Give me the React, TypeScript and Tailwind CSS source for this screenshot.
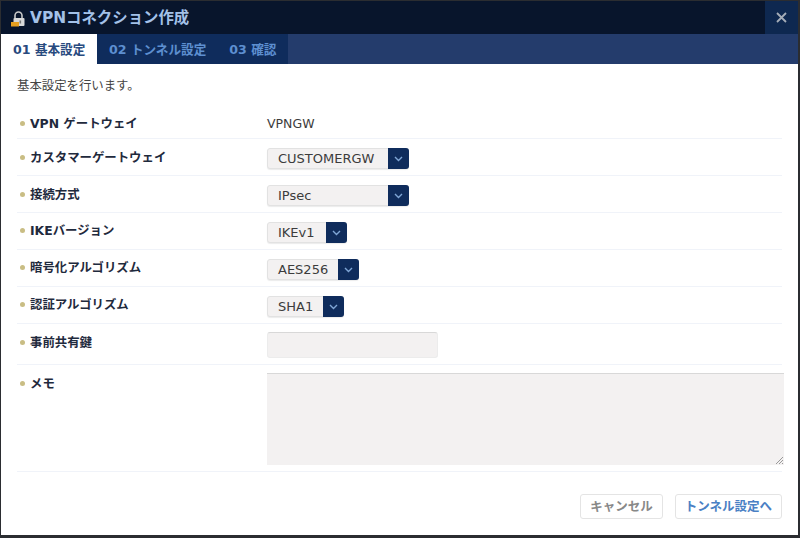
const font = { fontFamily: '"DejaVu Sans","Noto Sans CJK JP",sans-serif' };

function Chevron() {
  return (
    <svg width="9" height="6" viewBox="0 0 9 6" fill="none" stroke="#7fa6d6" strokeWidth="1.4">
      <path d="M1 1l3.5 3.5L8 1" />
    </svg>
  );
}

function Select({ value, width }: { value: string; width: string }) {
  return (
    <div className={`flex h-[21px] ${width} rounded-[3px] border border-[#e2e2e2] bg-[#f3f1f1] shadow-[0_1px_1px_rgba(0,0,0,0.08)]`}>
      <div className="flex-1 pl-[10px] text-[13px] leading-[20px] text-[#3c3c3c]">{value}</div>
      <div className="w-[21px] h-[21px] -my-px -mr-px rounded-r-[3px] bg-[#0f2c5c] flex items-center justify-center"><Chevron /></div>
    </div>
  );
}

function Row({ label, h, children, top }: { label: string; h: string; children: React.ReactNode; top: string }) {
  return (
    <div className={`flex ${h} border-b border-[#f0f3f9]`}>
      <div className={`w-[250px] shrink-0 flex items-start ${top}`}>
        <span className="mt-[6px] mr-[5px] ml-[3px] size-[5px] rounded-full bg-[#c9bd84]" />
        <span className="text-[12.4px] leading-[17px] font-bold text-[#1f2a3d]">{label}</span>
      </div>
      <div className="flex-1">{children}</div>
    </div>
  );
}

export default function App() {
  return (
    <div style={font} className="w-[800px] h-[538px] bg-[#2b2d31] overflow-hidden pl-px pr-[2px] pb-[3px] pt-px">
      <div className="h-full bg-white flex flex-col">
        <div className="h-[33px] bg-[#08152c] flex items-center shrink-0">
          <svg className="ml-[9px] mr-[3px] mt-[2px]" width="17" height="17" viewBox="0 0 17 17">
            <path d="M5 8V5.5a3.5 3.5 0 0 1 7 0V8" fill="none" stroke="#c9c9c9" strokeWidth="1.6" />
            <rect x="3.5" y="8" width="11" height="8" rx="1" fill="#d8d8d8" />
            <rect x="1" y="12" width="8" height="4.5" fill="#e8a020" />
            <rect x="9.5" y="10.5" width="1.6" height="3" fill="#777" />
          </svg>
          <span className="mt-[3px] text-[15.4px] font-bold text-[#a3c1e8]">VPNコネクション作成</span>
          <div className="ml-auto w-[33px] h-[33px] bg-[#0e2850] flex items-center justify-center">
            <svg width="11" height="11" viewBox="0 0 11 11" stroke="#a5adb8" strokeWidth="1.8"><path d="M1 1l9 9M10 1l-9 9" /></svg>
          </div>
        </div>
        <div className="h-[30px] bg-[#243c6c] flex shrink-0 text-[12.6px] font-bold leading-[31px]">
          <div className="w-[96px] bg-white text-[#284a7e] pl-[12px]">01 基本設定</div>
          <div className="w-[191px] bg-[#0f2c5c] text-[#5d8fd0] flex">
            <span className="pl-[12px]">02 トンネル設定</span>
            <span className="pl-[23px]">03 確認</span>
          </div>
        </div>
        <div className="flex-1 pl-[16px] pr-[16px] flex flex-col">
          <p className="mt-[13px] mb-[21px] text-[12.4px] leading-[17px] text-[#444]">基本設定を行います。</p>
          <Row label="VPN ゲートウェイ" h="h-[24px]" top="pt-0"><div className="text-[12.5px] leading-[17px] text-[#3c3c3c]">VPNGW</div></Row>
          <Row label="カスタマーゲートウェイ" h="h-[37px]" top="pt-[10px]"><div className="pt-[9px]"><Select value="CUSTOMERGW" width="w-[142px]" /></div></Row>
          <Row label="接続方式" h="h-[37px]" top="pt-[10px]"><div className="pt-[9px]"><Select value="IPsec" width="w-[142px]" /></div></Row>
          <Row label="IKEバージョン" h="h-[37px]" top="pt-[9px]"><div className="pt-[9px]"><Select value="IKEv1" width="w-[80px]" /></div></Row>
          <Row label="暗号化アルゴリズム" h="h-[37px]" top="pt-[9px]"><div className="pt-[9px]"><Select value="AES256" width="w-[92px]" /></div></Row>
          <Row label="認証アルゴリズム" h="h-[37px]" top="pt-[9px]"><div className="pt-[9px]"><Select value="SHA1" width="w-[77px]" /></div></Row>
          <Row label="事前共有鍵" h="h-[41px]" top="pt-[10px]"><div className="pt-[8px]"><div className="w-[171px] h-[26px] rounded-[3px] bg-[#f3f1f1] border border-[#ececec] border-t-[#d8d8d8]" /></div></Row>
          <Row label="メモ" h="h-[107px]" top="pt-[10px]">
            <div className="pt-[8px]">
              <div className="relative h-[92px] w-[517px] bg-[#f3f1f1] border-t border-[#d8d8d8]">
                <svg className="absolute right-0 bottom-0" width="9" height="9" viewBox="0 0 9 9" stroke="#999" strokeWidth="1"><path d="M8 1L1 8M8 4L4 8M8 7L7 8" /></svg>
              </div>
            </div>
          </Row>
          <div className="flex justify-end gap-[12px] mt-[22px]">
            <div className="h-[25px] w-[83px] rounded-[3px] border border-[#e4e4e4] text-center text-[12.5px] font-bold leading-[24px] text-[#888]">キャンセル</div>
            <div className="h-[25px] w-[107px] rounded-[3px] border border-[#e4e4e4] text-center text-[12.5px] font-bold leading-[24px] text-[#4a80c4]">トンネル設定へ</div>
          </div>
        </div>
      </div>
    </div>
  );
}
